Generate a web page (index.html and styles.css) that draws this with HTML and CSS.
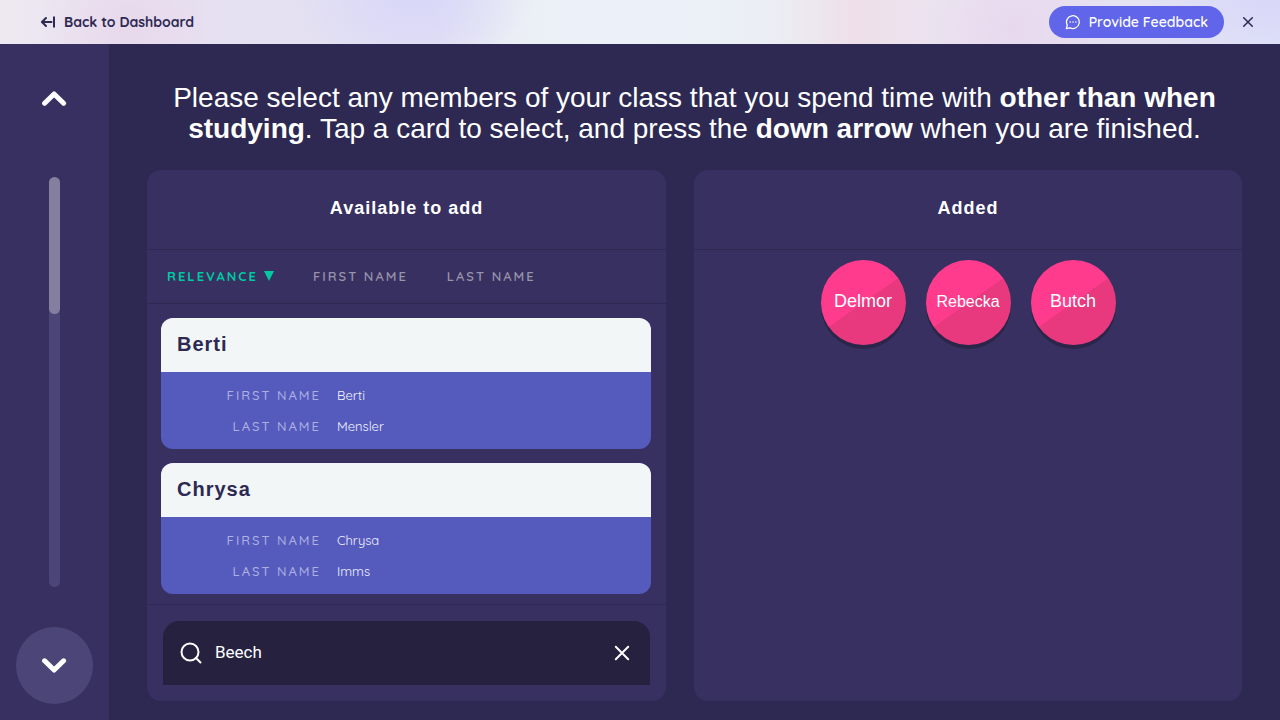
FILE: index.html
```html
<!DOCTYPE html>
<html lang="en">
<head>
<meta charset="utf-8">
<meta name="viewport" content="width=device-width, initial-scale=1">
<title>Select class members</title>
<link rel="stylesheet" href="styles.css">
</head>
<body>
<header class="topbar">
  <a class="back" href="#">
    <svg width="16" height="16" viewBox="0 0 16 16" fill="none" stroke="currentColor" stroke-width="2" stroke-linecap="round" stroke-linejoin="round" aria-hidden="true"><path d="M2 8h9.500M6 4L1.900 8l4.100 4"/><path d="M14 2.500v11" stroke-linecap="butt"/></svg>
    Back to Dashboard
  </a>
  <div class="topbar-actions">
    <button class="feedback" type="button">
      <svg width="16" height="16" viewBox="0 0 16 16" fill="none" stroke="currentColor" stroke-width="1.3" stroke-linecap="round" stroke-linejoin="round" aria-hidden="true"><path d="M1.300 14.600l1-3.400A6.400 6.400 0 1 1 5 13.800z"/><path d="M5.200 8h.1M8 8h.1M10.800 8h.1" stroke-width="1.500"/></svg>
      Provide Feedback
    </button>
    <button class="close" type="button" aria-label="Close">
      <svg width="16" height="16" viewBox="0 0 16 16" fill="none" stroke="currentColor" stroke-width="1.5" stroke-linecap="round" aria-hidden="true"><path d="M3.700 3.700l8.600 8.600M12.300 3.700l-8.600 8.600"/></svg>
    </button>
  </div>
</header>
<div class="layout">
  <nav class="rail" aria-label="Questions">
    <button class="rail-button" type="button" aria-label="Previous">
      <svg width="25" height="17" viewBox="0 0 25 17" fill="none" stroke="currentColor" stroke-width="5" stroke-linecap="round" stroke-linejoin="round" aria-hidden="true"><path d="M2.600 13.200L12.100 4l9.500 9.200"/></svg>
    </button>
    <div class="track"><div class="track-thumb"></div></div>
    <button class="rail-button rail-next" type="button" aria-label="Next">
      <svg width="25" height="17" viewBox="0 0 25 17" fill="none" stroke="currentColor" stroke-width="5" stroke-linecap="round" stroke-linejoin="round" aria-hidden="true"><path d="M2.600 3.800L12.100 13l9.500-9.200"/></svg>
    </button>
  </nav>
  <main class="main">
    <h1 class="prompt">Please select any members of your class that you spend time with <b>other than when studying</b>. Tap a card to select, and press the <b>down arrow</b> when you are finished.</h1>
    <div class="panels">
      <section class="panel">
        <h2 class="panel-title">Available to add</h2>
        <div class="sort">
          <button class="sort-button sort-active" type="button">Relevance <svg width="10" height="10" viewBox="0 0 10 10" fill="currentColor" aria-hidden="true"><path d="M0 0h10L5 10z"/></svg></button>
          <button class="sort-button" type="button">First name</button>
          <button class="sort-button" type="button">Last name</button>
        </div>
        <div class="cards">
          <article class="card">
            <h3 class="card-name">Berti</h3>
            <dl class="details">
              <dt>First name</dt><dd>Berti</dd>
              <dt>Last name</dt><dd>Mensler</dd>
            </dl>
          </article>
          <article class="card">
            <h3 class="card-name">Chrysa</h3>
            <dl class="details">
              <dt>First name</dt><dd>Chrysa</dd>
              <dt>Last name</dt><dd>Imms</dd>
            </dl>
          </article>
        </div>
        <div class="search-area">
          <div class="search">
            <svg width="24" height="24" viewBox="0 0 24 24" fill="none" stroke="currentColor" stroke-width="2" stroke-linecap="round" aria-hidden="true"><circle cx="11" cy="11" r="8.500"/><path d="M17 17l4.500 4.500"/></svg>
            <input class="search-input" type="text" value="Beech" aria-label="Search names">
            <button class="clear" type="button" aria-label="Clear search">
              <svg width="24" height="24" viewBox="0 0 24 24" fill="none" stroke="currentColor" stroke-width="2" stroke-linecap="round" aria-hidden="true"><path d="M5.800 5.800l12.400 12.400M18.200 5.800L5.800 18.200"/></svg>
            </button>
          </div>
        </div>
      </section>
      <section class="panel">
        <h2 class="panel-title">Added</h2>
        <div class="added">
          <button class="person" type="button">Delmor</button>
          <button class="person person-long" type="button">Rebecka</button>
          <button class="person" type="button">Butch</button>
        </div>
      </section>
    </div>
  </main>
</div>
</body>
</html>
```
FILE: styles.css
```css
*, *::before, *::after { box-sizing: border-box; }
body {
  margin: 0;
  min-height: 100vh;
  display: flex;
  flex-direction: column;
  background: #2d2952;
  color: #fff;
  font-family: "Liberation Sans", Arial, sans-serif;
}
button, input { font: inherit; color: inherit; border: 0; background: none; padding: 0; }
button { cursor: pointer; }
svg { display: block; flex: none; }
h1, h2, h3, dl, dd { margin: 0; }

.topbar {
  display: flex;
  align-items: center;
  justify-content: space-between;
  height: 44px;
  padding: 0 24px 0 40px;
  color: #2d2952;
  font-family: Quicksand, Lato, sans-serif;
  font-size: 14px;
  background:
    radial-gradient(ellipse 90px 90px at 130px 26px, #e8d8ec 0%, #e8d8ec00 100%),
    radial-gradient(ellipse 120px 70px at 415px 0, #d8d7f9 0%, #d8d7f900 100%),
    radial-gradient(ellipse 100px 90px at 1015px 28px, #e8d8ee 0%, #e8d8ee00 100%),
    radial-gradient(ellipse 130px 70px at 1275px 0, #d8d7f9 0%, #d8d7f900 100%),
    linear-gradient(90deg, #eee8f1 0%, #e6e1f1 15%, #e2e0f3 34%, #ebeff5 40%, #ecf1f9 48%, #ebeff5 60%, #eedfea 67%, #ebe5f0 74%, #e4e1f2 88%, #e0e3f6 100%);
}
.back { display: flex; align-items: center; gap: 8px; color: inherit; font-weight: 700; text-decoration: none; }
.topbar-actions { display: flex; align-items: center; gap: 16px; }
.feedback {
  display: flex;
  align-items: center;
  gap: 8px;
  height: 32px;
  padding: 0 16px;
  border-radius: 16px;
  background: #6065ea;
  color: #fff;
  font-weight: 600;
}

.layout { flex: 1; display: flex; }
.rail {
  flex: none;
  display: flex;
  flex-direction: column;
  align-items: center;
  gap: 40px;
  padding: 16px;
  background: #383060;
}
.rail-button { display: grid; place-items: center; width: 77px; height: 77px; border-radius: 50%; }
.rail-next { background: #4c4678; }
.track { flex: 1; width: 11px; border-radius: 6px; background: #4c4678; }
.track-thumb { height: 33.4%; border-radius: 6px; background: #857f9f; }

.main { flex: 1; display: flex; flex-direction: column; gap: 26px; padding: 38px 38px 19px; }
.prompt { font-size: 28px; line-height: 31px; font-weight: 400; text-align: center; }
.panels { flex: 1; display: grid; grid-template-columns: 519fr 548fr; gap: 28px; }
.panel { display: flex; flex-direction: column; border-radius: 14px; background: #383060; }
.panel-title {
  height: 80px;
  border-bottom: 1px solid #2d2952;
  font-size: 18px;
  line-height: 77px;
  letter-spacing: 1px;
  text-align: center;
}
.sort { display: flex; align-items: center; gap: 39px; height: 54px; padding: 0 20px 2px; border-bottom: 1px solid #2d2952; }
.sort-button {
  display: flex;
  align-items: center;
  gap: 6px;
  color: #9793ab;
  font-family: Quicksand, Lato, sans-serif;
  font-size: 13px;
  font-weight: 600;
  letter-spacing: 2px;
  text-transform: uppercase;
}
.sort-active { color: #00c9a0; font-weight: 700; }

.cards { flex: 1; display: flex; flex-direction: column; gap: 14px; padding: 14px 15px 10px 14px; }
.card { border-radius: 12px; overflow: hidden; background: #555bbd; }
.card-name {
  padding: 0 16px 2px;
  background: #f2f6f7;
  color: #2d2952;
  font-size: 20px;
  line-height: 52px;
  letter-spacing: 1px;
}
.details {
  display: grid;
  grid-template-columns: 160px 1fr;
  column-gap: 16px;
  padding: 8px 0 7px;
  font-family: Quicksand, Lato, sans-serif;
  font-size: 13px;
  line-height: 31px;
}
.details dt { color: #aeb0e0; font-weight: 500; letter-spacing: 2px; text-align: right; text-transform: uppercase; }
.details dd { color: #f2f2fb; }

.search-area { padding: 16px; border-top: 1px solid #2d2952; }
.search { display: flex; align-items: center; gap: 12px; height: 64px; padding: 0 16px; border-radius: 16px 16px 0 0; background: #25213f; }
.search-input { flex: 1; min-width: 0; padding-bottom: 2px; outline: 0; font-family: Roboto, sans-serif; font-size: 17px; }

.added { display: flex; flex-wrap: wrap; justify-content: center; gap: 20px; padding: 10px; }
.person {
  width: 85px;
  height: 85px;
  padding-bottom: 2px;
  border-radius: 50%;
  background: linear-gradient(145deg, #ff3b8d 50%, #e8387e 50%);
  box-shadow: 0 4px 0 #2b2649;
  font-size: 18px;
}
.person-long { font-size: 16px; }
```
